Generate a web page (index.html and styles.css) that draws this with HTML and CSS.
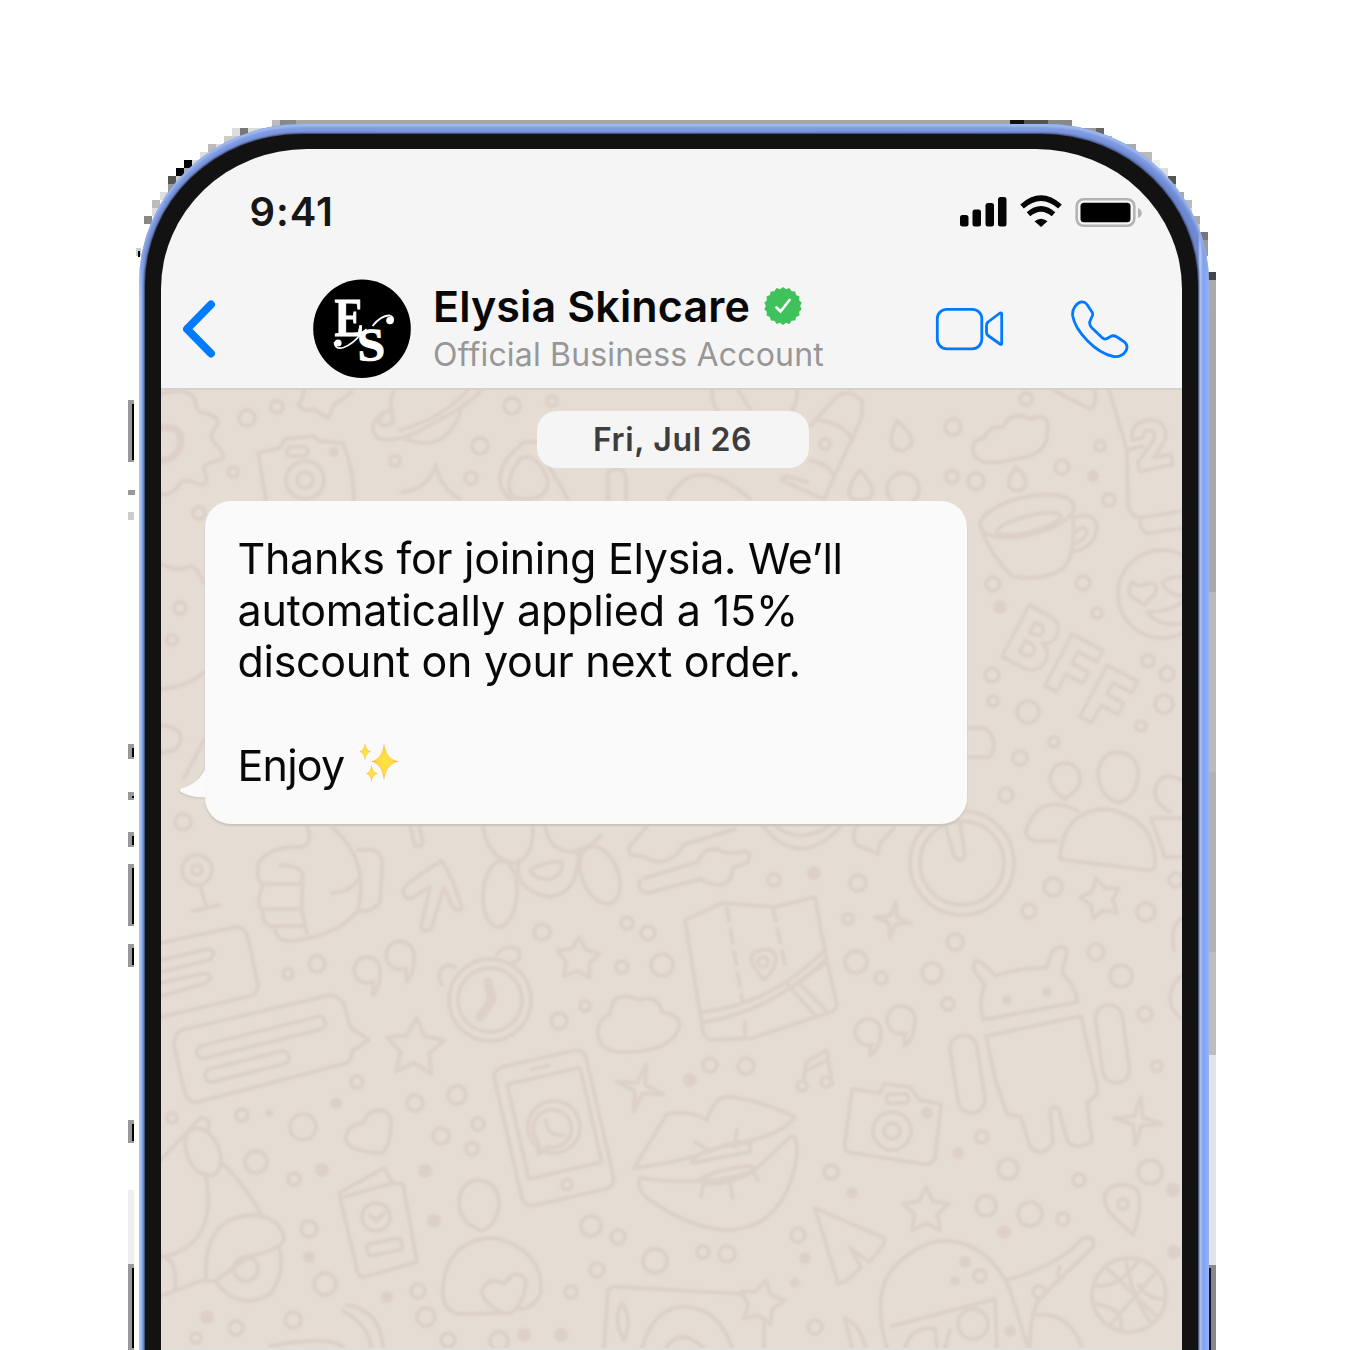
FILE: index.html
```html
<!DOCTYPE html>
<html lang="en">
<head>
<meta charset="utf-8">
<title>Elysia Skincare</title>
<link rel="stylesheet" href="styles.css">
</head>
<body>
<svg class="edge" viewBox="0 0 1350 1350" aria-hidden="true"></svg>
<main class="phone">
  <div class="bezel">
    <div class="screen">
      <header class="top">
        <div class="status">
          <span class="time">9:41</span>
          <svg class="indicators" width="184" height="34" viewBox="958 195 184 34">
            <g fill="#050505">
              <rect x="960" y="215" width="8.500" height="11.500" rx="2.500"/>
              <rect x="972.500" y="209.500" width="8.500" height="17" rx="2.500"/>
              <rect x="985.500" y="203" width="8.500" height="23.500" rx="2.500"/>
              <rect x="998" y="197" width="8.500" height="29.500" rx="2.500"/>
              <path d="M1034.500 221.200Q1041 216.200 1047.500 221.200L1041 227Z"/>
            </g>
            <g fill="none" stroke="#050505" stroke-width="5.400">
              <path d="M1022 206.500Q1041 189.800 1060 206.500"/>
              <path d="M1028.500 214.300Q1041 203.500 1053.500 214.300"/>
            </g>
            <rect x="1076.700" y="199.200" width="57.600" height="26.600" rx="7" fill="none" stroke="#b3b3b3" stroke-width="2.600"/>
            <rect x="1080.500" y="202.700" width="50" height="19.500" rx="3.500" fill="#000"/>
            <path d="M1138 208q3.800 1.500 3.800 5t-3.800 5z" fill="#b3b3b3"/>
          </svg>
        </div>
        <div class="bar">
          <svg class="back" width="36" height="60" viewBox="181 299 36 60"><path d="M211 304.500L187 329L211 353.500" fill="none" stroke="#007aff" stroke-width="8" stroke-linecap="round" stroke-linejoin="round"/></svg>
          <svg class="avatar" width="98" height="100" viewBox="312.500 279 98 100">
            <ellipse cx="361.500" cy="328.700" rx="48.800" ry="49.200" fill="#000"/>
            <g fill="#fff" stroke="#fff" stroke-width="1" font-family="'Liberation Serif',serif" font-weight="700">
              <text transform="translate(334 336) scale(.8 1)" font-size="55">E</text>
              <text transform="translate(357.500 361) rotate(-3) scale(1.08 1)" font-size="46">S</text>
            </g>
            <path d="M334 342Q334 350 343 347.500Q353 344 361 333L366 329" fill="none" stroke="#fff" stroke-width="1.600"/>
            <circle cx="337.500" cy="343" r="3.600" fill="#fff"/>
            <path d="M372 326Q381 315 389 315.500Q394 317 392 321" fill="none" stroke="#fff" stroke-width="1.800"/>
            <circle cx="389.500" cy="320.500" r="3.800" fill="#fff"/>
          </svg>
          <div class="who">
            <div class="name"><span>Elysia Skincare</span>
              <svg class="badge" width="38" height="38" viewBox="-19 -19 38 38"><polygon id="seal" fill="#3fc25c"/><path d="M-6.500 1.500L-2.500 5.500L6.500-6" fill="none" stroke="#fff" stroke-width="2.600" stroke-linecap="round"/></svg>
            </div>
            <div class="kind">Official Business Account</div>
          </div>
          <svg class="calls" width="196" height="60" viewBox="934 299 196 60" fill="none" stroke="#007aff" stroke-width="2.800" stroke-linejoin="round">
            <rect x="937.300" y="309.300" width="44.500" height="39.500" rx="9.500"/>
            <path d="M1001.700 314V343.500Q1001.700 345 1000 344L988 335.500Q986.500 334.500 986.500 332V325.500Q986.500 323 988 322L1000 313Q1001.700 312.500 1001.700 314Z"/>
            <path d="M1075 306.500C1079 301 1084 300.500 1087 304.500L1092.300 312.500Q1093.500 315 1091.300 318L1089.500 322.500Q1089.500 325.500 1092 328L1102 337.500Q1104.500 340 1107 338.500L1112 335.800Q1114.500 335.500 1117 337L1124.500 342Q1129 346 1125.500 351.500Q1121.500 357.500 1113.500 356.500C1095 353 1075.500 331 1072.700 316Q1072 310.500 1075 306.500Z"/>
          </svg>
        </div>
      </header>
      <section class="chat">
        <svg class="wallpaper" viewBox="161 390 1021 958" aria-hidden="true">
          <g id="doodles">
            <path d="M161 394Q186 387 194 398Q197 414 204 413Q218 415 218 424Q208 435 213 441Q228 457 221 460Q203 463 204 470Q210 485 201 485Q183 478 180 483Q175 494 161 495"/>
            <path d="M161 428Q181 425 181 441Q179 459 161 461" stroke-width="7"/>
            <path d="M304 390Q303 399 298 405Q306 413 313 409L328 418L334 405L352 392M258 453L280 448L285 439L314 436L319 441L343 443Q354 470 354 501M258 453L266 501M290 447h16q5 7-3 9h-14q-5-5 1-9z"/>
            <circle cx="305" cy="480" r="19"/><circle cx="305" cy="480" r="8"/>
            <path d="M393 392Q388 405 394 422Q380 430 379 420Q383 410 392 410M385 412Q365 425 378 438Q400 445 435 422Q470 405 483 388M400 430Q440 420 468 390M403 438Q448 457 463 404"/>
            <path d="M402 492Q427 490 436 465Q440 488 460 499M510 500Q490 480 510 455L524 442H538M512 497Q548 505 548 480Q536 452 521 458Q503 480 512 497M548 464L568 499M608 500V472Q625 463 626 480V500M668 500Q695 450 750 499"/>
            <path d="M712 390Q712 405 718 411M738 390L750 409M797 390Q798 401 792 410M810 426L837 396Q850 388 862 401V417L824 499L781 480L786 476L807 482M817 420Q845 423 853 441M810 460Q830 465 833 475"/>
            <path d="M975 457Q968 440 984 438Q990 425 1003 427Q1012 410 1030 419Q1052 411 1047 434Q1048 455 1015 459Q985 467 975 457"/>
            <path d="M1055 391L1090 409Q1097 406 1095 390M1109 390L1127 450L1128 505Q1132 520 1145 517L1182 511M1140 522Q1142 535 1152 533L1182 528M1127 450L1143 446M897 421Q883 450 903 451Q923 442 897 421M860 470Q837 500 862 501Q884 496 860 470M1016 467Q1000 490 1019 491Q1034 484 1016 467"/>
            <ellipse cx="1027" cy="516" rx="48" ry="19" transform="rotate(-13 1027 516)"/><ellipse cx="1029" cy="524" rx="33" ry="8" transform="rotate(-14 1029 524)"/>
            <path d="M981 528Q990 555 1012 576Q1040 582 1063 569Q1076 555 1073 518Q1092 510 1097 525Q1096 548 1074 551M1074 533Q1084 524 1087 531Q1086 540 1075 543"/>
            <circle cx="1162" cy="594" r="44"/>
            <path d="M1132 582Q1125 594 1135 599L1144 605L1155 594Q1160 580 1145 584Q1138 588 1132 582M1162 583Q1168 576 1182 577M1162 583Q1167 594 1182 596M1147 612Q1170 612 1182 602M1147 612Q1160 628 1182 623"/>
            <g font-family="Inter,sans-serif" font-weight="900" font-size="80">
              <text transform="translate(999 655) rotate(28) scale(.85 1)">B</text><text transform="translate(1042 684) rotate(28) scale(.85 1)">F</text><text transform="translate(1077 715) rotate(28) scale(.85 1)">F</text><text transform="translate(1137 472) rotate(-12) scale(.92 1)" font-size="66">2</text>
            </g>
            <path d="M967 728H985Q1000 741 990 757H967"/>
            <path d="M1065 799Q1050 790 1050 777Q1053 763 1066 763Q1080 765 1080 780Q1079 790 1065 799M1118 803Q1098 795 1098 772Q1101 752 1119 752Q1139 755 1138 776Q1136 798 1118 803M1170 812Q1154 803 1155 790Q1158 776 1171 776L1182 780"/>
            <path d="M1060 859Q1063 809 1108 809Q1157 820 1155 866Q1154 870 1148 870L1065 860ZM1078 811Q1040 791 1026 830Q1025 841 1040 841H1057M1182 818L1151 818L1165 857H1182"/>
            <circle cx="962" cy="863" r="52"/><circle cx="962" cy="863" r="42"/>
            <path d="M946 827L954 856Q960 865 965 855L960 823M161 564Q180 573 190 566Q197 567 204 583M161 689Q188 687 204 672M161 725Q192 730 175 750L161 753M184 778L204 740"/>
            <path d="M307 826Q315 847 298 847Q265 847 258 865Q256 880 263 885Q254 907 263 910Q261 925 274 927Q277 942 292 941Q340 935 358 910Q370 860 333 828M358 850H373Q384 853 382 872L380 902Q373 912 360 911M263 884H300Q311 867 280 865M263 909H302M272 926H303M303 884Q299 910 307 933M332 893Q350 892 358 880"/>
            <path d="M403 890Q404 884 441 861Q450 870 462 908Q457 913 452 906L444 887L431 929Q424 934 421 927L430 887L410 899Q404 899 403 890M410 826L415 846Q422 848 423 842L419 826"/>
            <circle cx="197" cy="870" r="15"/><circle cx="197" cy="870" r="5"/><path d="M200 886L207 908M193 911L219 905"/>
            <path d="M161 943L235 927Q246 926 249 942L258 985Q258 994 250 996L161 1017M161 960L208 949Q219 952 209 960L161 972M161 983L205 973Q216 977 204 984L161 996"/>
            <path d="M182 1030L330 995Q344 997 346 1012L351 1028L369 1040L352 1051Q352 1063 343 1064L198 1102Q187 1103 184 1090L174 1045Q174 1033 182 1030"/>
            <rect x="195" y="1031" width="132" height="13" rx="6" transform="rotate(-14 261 1037)"/><rect x="204" y="1060" width="86" height="13" rx="6" transform="rotate(-14 247 1066)"/>
            <path d="M372 982A13 13 0 1 1 380 968Q381 988 373 995L373 981M406 968A14 14 0 1 1 414 954Q415 973 407 981L406 968M873 1044A13 13 0 1 1 881 1030Q881 1048 870 1056L871 1045M906 1033A14 14 0 1 1 915 1018Q915 1037 905 1046L904 1034"/>
            <circle cx="490" cy="1000" r="41"/><circle cx="490" cy="1000" r="32"/><path d="M488 982L492 1000L480 1017" stroke-width="9"/><path d="M442 985Q434 970 448 965L455 967M497 954Q505 944 518 949Q523 961 513 962"/>
            <path d="M483 828Q490 862 517 863Q534 855 533 827M545 827Q551 852 572 852Q592 848 601 835M519 860Q512 890 550 897Q580 892 578 852M530 870Q548 860 562 862Q563 877 548 879Q535 880 530 870"/>
            <ellipse cx="500" cy="894" rx="17" ry="33" transform="rotate(4 500 894)"/><ellipse cx="600" cy="875" rx="18" ry="30" transform="rotate(-22 600 875)"/>
            <path d="M647 826L630 846Q624 857 643 856Q655 864 665 861Q680 855 683 845L735 829M640 881Q636 891 648 893L700 879Q730 895 733 868L748 862Q753 849 742 852Q725 855 720 850Q705 845 698 862L645 878M762 825Q800 872 842 825M774 825Q800 846 830 825M857 826Q850 837 857 845L878 854L880 843L894 828"/>
            <path d="M685 920L722 903L775 907L815 897Q820 930 837 1005Q836 1011 828 1013L753 1038L710 1040Q702 1035 702 1025ZM702 1012Q770 1005 824 951M704 1022Q770 1012 826 959M788 985L815 1015M824 964L799 983L826 1010"/>
            <path d="M727 908L742 1000M773 908L786 970M745 1022V1035" stroke-dasharray="13 9"/>
            <path d="M764 980Q745 960 755 952Q773 945 776 958Q776 969 764 980M804 1080L806 1062L827 1050L832 1084M805 1071L828 1060"/><circle cx="763" cy="962" r="5"/><circle cx="802" cy="1086" r="5"/><circle cx="826" cy="1082" r="5"/>
            <path d="M598 1033Q597 1020 610 1014Q612 993 630 997L640 1000Q658 994 662 1012Q682 1015 679 1028Q672 1050 630 1052Q598 1054 598 1033"/>
            <path d="M983 1020Q978 1000 985 985L974 970Q972 957 982 963L996 976Q1020 967 1046 968L1053 950Q1065 943 1067 952L1062 973Q1075 985 1078 1002ZM995 1079L986 1036L1081 1016L1097 1085L1097 1094L1087 1103L1092 1141Q1075 1152 1067 1140L1059 1110Q1053 1103 1050 1112L1053 1143Q1041 1160 1030 1146L1021 1117L1007 1114Z"/>
            <rect x="954" y="1035" width="27" height="78" rx="13" transform="rotate(-9 968 1074)"/><rect x="1099" y="1005" width="27" height="78" rx="13" transform="rotate(-8 1112 1044)"/>
            <g transform="rotate(-13 554 1128)"><rect x="507" y="1057" width="94" height="142" rx="10"/><rect x="518" y="1075" width="75" height="97" rx="2"/><path d="M545 1066H563"/><circle cx="554" cy="1186" r="5"/></g>
            <circle cx="554" cy="1127" r="26"/><path d="M538 1154L538 1141A19 19 0 1 1 548 1147ZM546 1120Q547 1137 563 1135"/>
            <path d="M634 1168L667 1114Q690 1110 707 1120Q715 1095 730 1097Q760 1100 795 1117Q780 1138 725 1145Q690 1161 634 1168M640 1178Q710 1188 755 1170L790 1137Q798 1135 797 1155Q785 1230 725 1230Q690 1228 650 1200Q636 1190 640 1178M692 1160Q705 1147 750 1143V1152Q720 1157 692 1163M698 1180Q720 1168 751 1166Q760 1174 725 1182Q710 1187 698 1180M695 1142L710 1151M737 1130L735 1147M704 1183L701 1196M730 1183L733 1198M752 1170L758 1180"/>
            <path d="M852 1089L880 1093L884 1084L910 1087L920 1100L941 1104L935 1159Q930 1165 922 1164L848 1152Q844 1149 845 1143ZM889 1094h18q4 7-1 9h-18q-4-6 1-9"/><circle cx="892" cy="1131" r="19"/><circle cx="892" cy="1131" r="8"/>
            <path d="M815 1208L884 1238Q888 1242 869 1262L850 1248L861 1267Q843 1286 838 1283Z"/>
            <path d="M382 1153Q391 1145 391 1122Q390 1110 378 1110Q366 1112 364 1123Q345 1125 346 1140Q350 1152 382 1153"/>
            <ellipse cx="203" cy="1152" rx="16" ry="25" transform="rotate(-24 203 1152)"/>
            <path d="M161 1160L200 1118Q212 1118 208 1130M205 1173Q220 1240 168 1256M223 1164Q247 1187 262 1216M206 1281Q202 1215 255 1215Q283 1219 284 1240Q280 1250 250 1256L215 1281ZM217 1283Q240 1312 270 1294Q285 1275 280 1250M161 1296L206 1279M161 1256Q178 1258 175 1290"/><circle cx="246" cy="1269" r="12"/>
            <path d="M339 1193L384 1168L393 1183L403 1184L417 1262L364 1277Q357 1277 356 1265ZM340 1198L393 1183"/><circle cx="376" cy="1217" r="14"/><path d="M370 1215L376 1221L384 1213"/><rect x="367" y="1241" width="35" height="12" rx="3" transform="rotate(-11 385 1247)"/>
            <path d="M482 1231Q458 1222 459 1200Q462 1181 478 1180Q500 1182 499 1206Q496 1225 482 1231"/><path d="M460 1314Q440 1311 443 1284Q450 1238 495 1238Q543 1250 541 1292Q535 1308 520 1309M460 1314L511 1313Q525 1302 526 1280Q515 1267 504 1284Q488 1276 482 1290Q482 1302 500 1312M347 1305Q380 1310 383 1347M343 1311Q369 1325 371 1347M270 1346Q330 1335 343 1347"/>
            <path d="M604 1348L608 1290Q612 1286 620 1287L742 1294M764 1325V1348M642 1348Q655 1304 688 1307Q720 1310 732 1348M666 1348Q680 1326 704 1348M622 1303Q612 1320 624 1340Q633 1320 622 1303M845 1318Q860 1325 866 1348M845 1318L852 1348"/>
            <path d="M887 1348Q870 1290 897 1264Q925 1238 950 1241Q990 1245 1010 1290L1028 1348M892 1326L995 1299L997 1348M905 1348Q910 1327 935 1328L937 1348M945 1348L950 1330M1007 1280Q1060 1265 1083 1238Q1096 1235 1093 1247L1040 1298Q1030 1312 1030 1348M1032 1315Q1070 1310 1082 1348M1060 1267Q1055 1277 1063 1278"/><circle cx="973" cy="1324" r="15"/>
            <circle cx="1129" cy="1295" r="37"/><path d="M1105 1266L1158 1318M1097 1304Q1127 1310 1120 1331M1110 1325L1157 1271M1126 1258Q1130 1295 1152 1324M1139 1285Q1147 1300 1166 1299M1094 1285Q1118 1290 1139 1260"/>
            <path d="M1133 1235L1109 1212Q1100 1195 1110 1188Q1125 1180 1138 1191Q1143 1205 1133 1235"/>
            <path d="M1182 918Q1170 925 1174 950M1180 976Q1160 1000 1180 1018"/>
          </g>
        </svg>
        <div class="date">Fri, Jul 26</div>
        <article class="bubble">
          <svg class="tail" width="28" height="34" viewBox="179 767 28 34"><path d="M206 767Q200 783 181 788.500Q178 791 183 793Q192 798 206 797Z" fill="#fafafa"/></svg>
          <p>Thanks for joining Elysia. We’ll</p>
          <p class="l2">automatically applied a 15%</p>
          <p class="l3">discount on your next order.</p>
          <p class="enjoy"><span>Enjoy</span>
            <svg class="sparkles" width="41" height="41" viewBox="359 742 41 41"><defs><radialGradient id="gold"><stop offset="0" stop-color="#ffe83c"/><stop offset=".55" stop-color="#ffd54e"/><stop offset="1" stop-color="#f2a95c"/></radialGradient></defs><g fill="url(#gold)"><path d="M384 743Q386 759 399 761.500Q386 764 384 781Q382 764 371 761.500Q382 759 384 743Z"/><path d="M365 743Q366 750 371 751.500Q366 753 365 761Q364 753 359.500 751.500Q364 750 365 743Z"/><path d="M371.500 765Q372.500 772 378 773.500Q372.500 775 371.500 782Q370.500 775 366 773.500Q370.500 772 371.500 765Z"/></g></svg>
          </p>
        </article>
      </section>
    </div>
  </div>
</main>
<script src="script.js"></script>
</body>
</html>
```
FILE: styles.css
```css
* { box-sizing: border-box; }
body { margin: 0; height: 1350px; overflow: hidden; position: relative; background: #fff; font-family: Inter, "Liberation Sans", sans-serif; color: #080808; }
.edge { position: absolute; inset: 0; width: 1350px; height: 1350px; }
.phone { position: relative; width: 1070px; height: 1226px; margin: 124px 0 0 139px; padding: 10px 11px 0 6px; border-radius: 163px 163px 0 0 / 159px 159px 0 0; background: linear-gradient(90deg, #c9edff 0, #86a5f1 3px, #7891d8 6px, #7d9be5 50%, #6d87d0 1059px, #b6ccfa 1061px, #83a1ec 1064px, #8cacf8 1068px, #a6c7ff 1070px); box-shadow: inset 0 3px 2px #9db8ee, inset 0 8px 3px #7f9ae2; overflow: hidden; }
.bezel { height: 1216px; padding: 15px 16px 0; background: #121212; border-radius: 156px 156px 0 0 / 151px 151px 0 0; box-shadow: 0 0 2px 1px #35415f; }
.screen { height: 1201px; border-radius: 146px 146px 0 0 / 140px 140px 0 0; overflow: hidden; background: #f5f5f5; display: flex; flex-direction: column; }
.top { height: 241px; flex: none; border-bottom: 2px solid #d3d0cd; }
.status { display: flex; justify-content: space-between; align-items: center; height: 34px; margin: 46px 40px 0 88.500px; }
.time { font-size: 40px; font-weight: 600; line-height: 34px; letter-spacing: .9px; color: #171717; }
.bar { display: flex; align-items: flex-start; margin-top: 50px; padding-left: 20px; }
.back { margin-top: 20px; }
.avatar { margin-left: 95.500px; }
.who { margin-left: 22.500px; width: 500.500px; }
.name { display: flex; align-items: center; gap: 14px; height: 54px; line-height: 54px; font-size: 43px; font-weight: 600; letter-spacing: .13px; white-space: nowrap; }
.kind { font-size: 32px; line-height: 44px; letter-spacing: .18px; color: #979797; white-space: nowrap; }
.calls { margin-top: 20px; }
.chat { position: relative; flex: 1; background: #e5ddd3; display: flex; flex-direction: column; align-items: flex-start; border-bottom: 2px solid #dededb; }
.wallpaper { position: absolute; left: 0; top: 0; width: 1021px; height: 958px; }
#doodles { fill: none; stroke: #dcd0c8; stroke-width: 4; stroke-linejoin: round; stroke-linecap: round; filter: blur(.8px); }
#doodles .dot { fill: #dcd0c8; stroke: none; }
.date { position: relative; width: 272px; height: 57px; margin: 21px 0 0 375.500px; line-height: 57px; text-align: center; font-size: 32px; font-weight: 600; letter-spacing: .65px; color: #3d3d3d; background: #f5f5f6; border-radius: 20px; }
.bubble { position: relative; width: 762px; height: 323px; margin: 33px 0 0 43.500px; padding: 32px 0 0 33px; background: #fafafa; border-radius: 26px; box-shadow: 0 2px 2px #cbc2ba; }
.tail { position: absolute; left: -26px; top: 266px; filter: drop-shadow(-1px 1px 1px #cbc2ba); }
.bubble p { margin: 0; height: 51.700px; line-height: 51.700px; font-size: 43px; letter-spacing: -.3px; white-space: nowrap; }
.bubble .l2 { letter-spacing: -.16px; }
.bubble .enjoy { display: flex; gap: 15px; margin-top: 51.700px; letter-spacing: -.8px; }
.sparkles { margin: 2px 0 0 -.500px; }
```
FILE: script.js
```js
const NS = 'http://www.w3.org/2000/svg';
function add(parent, tag, attrs) {
  const el = document.createElementNS(NS, tag);
  for (const k in attrs) el.setAttribute(k, attrs[k]);
  parent.appendChild(el);
}
const doodles = document.getElementById('doodles');

// Small rings scattered over the wallpaper: x, y, radius.
const rings = [[247,418,9],[277,407,7],[233,472,6],[395,461,6],[480,446,9],[471,478,7],[512,406,9],[552,401,6],[199,513,7],[1026,399,7],[953,427,9],[825,444,6],[1100,446,6],[1062,467,8],[952,477,7],[976,481,9],[903,489,17],[1109,500,7],[993,584,8],[1083,583,8],[1097,613,6],[992,675,8],[993,701,6],[1028,712,12],[1148,661,7],[1167,674,8],[1164,704,10],[1141,726,6],[1054,742,6],[1020,758,8],[1006,795,8],[1053,887,10],[1176,880,8],[183,822,9],[180,608,7],[172,640,6],[288,974,6],[317,964,9],[357,1082,7],[774,880,7],[858,883,9],[542,932,9],[627,923,7],[648,933,8],[622,967,7],[662,965,12],[585,1006,6],[559,1021,9],[848,919,6],[856,962,12],[710,1065,8],[746,1066,9],[881,978,7],[955,942,9],[932,973,11],[948,1004,7],[1029,911,8],[1146,912,10],[1096,952,9],[1121,976,12],[1145,1014,8],[1157,1066,6],[172,1118,6],[242,1115,7],[303,1127,14],[256,1162,12],[294,1179,7],[415,1103,9],[457,1095,10],[441,1136,9],[478,1124,7],[472,1149,7],[309,1229,9],[325,1284,12],[418,1291,8],[426,1317,10],[293,1320,9],[236,1328,8],[196,1338,6],[591,1226,11],[618,1237,8],[597,1270,8],[655,1261,13],[571,1292,7],[448,1340,8],[499,1341,10],[831,1172,8],[982,1137,7],[1008,1169,11],[1079,1180,7],[1150,1172,13],[986,1206,11],[1030,1214,13],[1063,1219,7],[798,1235,8],[703,1252,7],[727,1254,9],[815,1327,8],[1123,1204,6],[980,1276,7],[1039,1292,7]];
for (const [cx, cy, r] of rings) add(doodles, 'circle', { cx, cy, r: r - 1 });
const dots = [[334,452,5],[1093,476,6],[1000,607,7],[814,873,7],[690,1080,7],[269,1113,4],[336,1103,6],[322,1170,7],[425,1171,7],[434,1221,7],[309,1257,6],[387,1297,6],[207,1317,7],[524,1335,7],[561,1335,7],[852,1193,6],[958,1153,6],[1173,1190,7],[1004,1232,7],[805,1258,6],[795,1283,5],[1174,1252,7],[1010,1331,6],[927,1113,6],[1007,1000,5],[1047,992,5],[965,1262,6],[955,1281,5]];
for (const [cx, cy, r] of dots) add(doodles, 'circle', { cx, cy, r, class: 'dot' });

function starPoints(x, y, r, inner, n, turn) {
  const pts = [];
  for (let i = 0; i < n * 2; i++) {
    const a = (turn - 90 + i * 180 / n) * Math.PI / 180, d = i % 2 ? r * inner : r;
    pts.push((x + d * Math.cos(a)).toFixed(1) + ',' + (y + d * Math.sin(a)).toFixed(1));
  }
  return pts.join(' ');
}
// x, y, radius, inner ratio, points, turn
[[415,1048,30,.5,5,3],[578,959,22,.55,5,4],[1101,899,21,.55,5,-14],[926,1211,24,.5,5,0],[761,1303,23,.55,5,12],[1138,1121,24,.25,4,7],[893,920,18,.28,4,10],[640,1088,24,.25,4,15]]
  .forEach(s => add(doodles, 'polygon', { points: starPoints(...s) }));
document.getElementById('seal').setAttribute('points', starPoints(0, 0, 19, .9, 18, 0));

// Blocky fringe around the handset: x, y, width, height, colour.
const edge = document.querySelector('.edge');
[[272,120,8,8,'#bbb'],[280,120,16,8,'#888'],[296,120,714,6,'#a5a5a5'],[1010,120,14,6,'#111'],[1024,120,24,8,'#555'],[1048,120,24,8,'#888'],[248,128,40,8,'#ddd'],[240,128,8,8,'#777'],[232,128,8,8,'#ddd'],[224,136,16,8,'#ccc'],[208,144,8,8,'#bbb'],[216,144,8,8,'#ddd'],[200,152,8,8,'#ddd'],[184,160,8,8,'#000'],[192,160,8,8,'#ddd'],[176,168,8,8,'#000'],[184,168,8,8,'#aaa'],[168,176,8,8,'#555'],[176,176,6,8,'#ccc'],[168,184,8,8,'#999'],[160,192,8,8,'#ddd'],[152,200,8,8,'#bbb'],[152,208,8,8,'#ddd'],[144,216,8,8,'#888'],[136,248,5,8,'#ccc'],[138,251,2,6,'#000'],
[1072,128,24,8,'#999'],[1096,128,8,8,'#666'],[1096,136,16,8,'#bbb'],[1120,144,16,8,'#aaa'],[1128,152,24,8,'#bbb'],[1144,160,8,8,'#ccc'],[1152,160,8,8,'#eee'],[1152,168,16,8,'#ddd'],[1168,176,8,8,'#555'],[1160,176,8,8,'#ddd'],[1168,184,8,8,'#aaa'],[1176,192,8,8,'#aaa'],[1184,200,8,8,'#bbb'],[1184,208,8,8,'#ddd'],[1192,216,8,8,'#aaa'],[1192,224,8,8,'#ccc'],[1200,232,8,8,'#777'],[1200,240,8,16,'#999'],[1208,272,8,8,'#444'],[1208,280,8,32,'#aaa'],[1208,312,8,280,'#a8a8a8'],[1208,592,8,180,'#bbb'],[1208,772,8,180,'#b2b2b2'],[1208,952,8,103,'#bdbdbd'],[1208,1055,8,210,'#e2e5e6'],[1208,1265,8,85,'#888'],[1209,1268,2,82,'#111133'],
[128,490,7,5,'#999'],[128,512,6,8,'#ccc'],[128,1190,6,74,'#eee']].forEach(b => add(edge, 'rect', { x: b[0], y: b[1], width: b[2], height: b[3], fill: b[4] }));
[[400,62],[744,15],[792,8],[832,15],[864,62],[944,23],[1120,23],[1264,86]].forEach(([y, h]) => {
  add(edge, 'rect', { x: 128, y, width: 6, height: h, fill: '#999' });
  add(edge, 'rect', { x: 132, y: y + 4, width: 2, height: h - 6, fill: '#000' });
});
```
